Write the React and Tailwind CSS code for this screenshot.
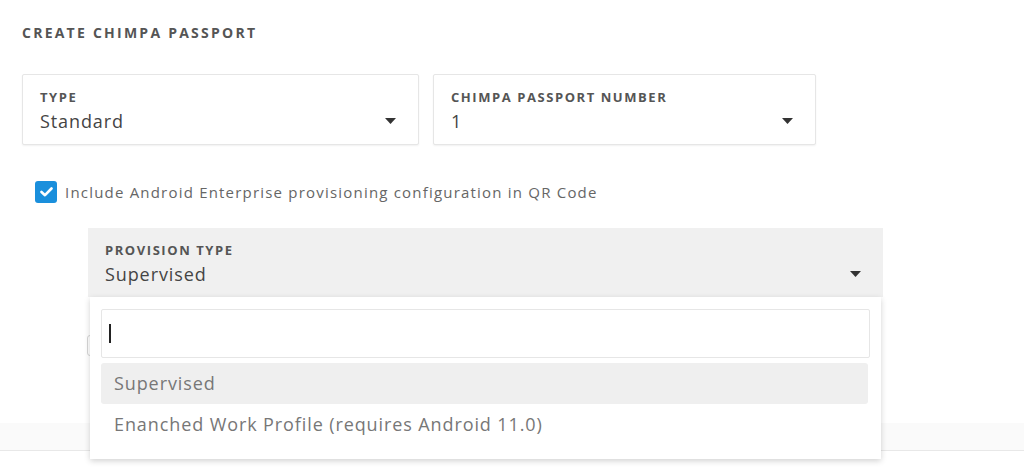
import React from 'react';

const Caret = ({ className = '' }) => (
  <svg width="11" height="6" viewBox="0 0 11 6" className={className}>
    <path d="M0 0 H11 L5.5 6 Z" fill="#333" />
  </svg>
);

const SelectCard = ({ label, value, width }) => (
  <div
    className={`${width} h-[71px] bg-white border border-[#e6e6e6] rounded-[2px] shadow-[0_1px_2px_rgba(0,0,0,0.06)] pl-[17px] pr-[22px] pt-[14px] flex flex-col`}
  >
    <span className="text-[13px] font-bold tracking-[0.12em] text-[#555] leading-[16px]">{label}</span>
    <div className="mt-[3px] flex items-center justify-between">
      <span className="text-[18px] tracking-[0.05em] text-[#444] leading-[26px]">{value}</span>
      <Caret />
    </div>
  </div>
);

export default function App() {
  return (
    <div className="relative h-[467px] bg-white overflow-hidden font-['Open_Sans',sans-serif]">
      <div className="px-[22px] pt-[24px]">
        <h1 className="text-[14px] font-bold tracking-[0.16em] text-[#555] leading-[18px]">
          CREATE CHIMPA PASSPORT
        </h1>

        <div className="mt-[32px] flex gap-[14px]">
          <SelectCard label="TYPE" value="Standard" width="w-[397px]" />
          <SelectCard label="CHIMPA PASSPORT NUMBER" value="1" width="w-[383px]" />
        </div>

        <label className="mt-[36px] ml-[13px] flex items-center gap-[8px]">
          <span className="w-[22px] h-[22px] rounded-[3px] bg-[#1a8fdc] flex items-center justify-center">
            <svg width="13" height="10" viewBox="0 0 13 10">
              <path d="M1.5 5 L5 8.2 L11.5 1.5" fill="none" stroke="#fff" strokeWidth="2.6" strokeLinecap="round" strokeLinejoin="round" />
            </svg>
          </span>
          <span className="text-[15px] tracking-[0.08em] text-[#666]">
            Include Android Enterprise provisioning configuration in QR Code
          </span>
        </label>

        <div className="relative mt-[24px] ml-[66px] w-[795px]">
          <div className="h-[69px] bg-[#f0f0f0] pl-[17px] pr-[22px] pt-[14px] flex flex-col">
            <span className="text-[13px] font-bold tracking-[0.12em] text-[#555] leading-[16px]">
              PROVISION TYPE
            </span>
            <div className="mt-[3px] flex items-center justify-between">
              <span className="text-[18px] tracking-[0.05em] text-[#444] leading-[26px]">Supervised</span>
              <Caret />
            </div>
          </div>

          <div className="mt-[38px] -ml-[1px] w-[21px] h-[21px] border border-[#d6d6d6] rounded-[3px] bg-white" />

          <div className="absolute top-[69px] left-[2px] right-[2px] z-10 bg-white shadow-[0_2px_6px_rgba(0,0,0,0.18)] px-[11px] pt-[12px] pb-[14px]">
            <div className="h-[49px] border border-[#e6e6e6] rounded-[2px] flex items-center pl-[7px]">
              <span className="w-[1.5px] h-[19px] bg-[#222]" />
            </div>
            <div className="mt-[5px] mr-[2px] h-[41px] bg-[#efefef] rounded-[3px] flex items-center pl-[13px] text-[18px] tracking-[0.05em] text-[#777]">
              Supervised
            </div>
            <div className="h-[41px] flex items-center pl-[13px] text-[18px] tracking-[0.05em] text-[#777]">
              Enanched Work Profile (requires Android 11.0)
            </div>
          </div>
        </div>
      </div>

      <div className="mt-[67px] h-[28px] bg-[#fafafa] border-b border-[#e8e8e8]" />
    </div>
  );
}
